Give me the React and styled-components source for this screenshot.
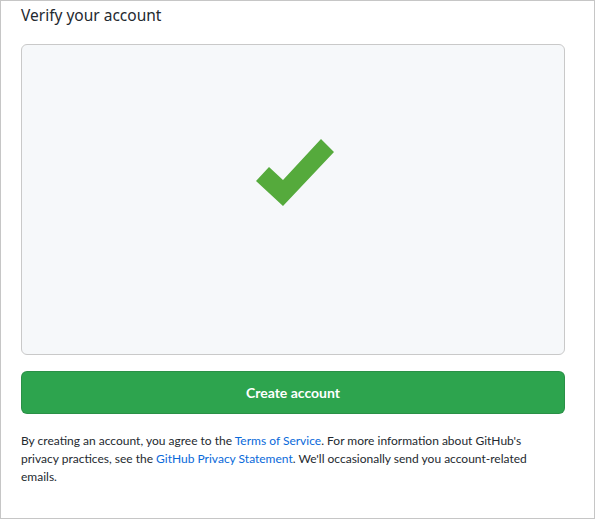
import React from 'react';
import styled, { createGlobalStyle } from 'styled-components';

const GlobalStyle = createGlobalStyle`
  html, body {
    margin: 0;
    padding: 0;
    background: #ffffff;
  }
  * {
    box-sizing: border-box;
  }
`;

const App = () => {
  return (
    <>
      <GlobalStyle />
      <Frame>
        <Title>Verify your account</Title>
        <Captcha>
          <svg width="84" height="68" viewBox="0 0 84 68" aria-hidden="true">
            <polygon points="5,42 18,28 32,41 70,0 83,13 32,67" fill="#55aa3c" />
          </svg>
        </Captcha>
        <Button type="button">Create account</Button>
        <Legal>
          By creating an account, you agree to the <Link href="#">Terms of Service</Link>. For more
          information about GitHub's privacy practices, see the{' '}
          <Link href="#">GitHub Privacy Statement</Link>. We'll occasionally send you account-related
          emails.
        </Legal>
      </Frame>
    </>
  );
};

export default App;

const Frame = styled.div`
  width: 595px;
  height: 519px;
  border: 1px solid #c6c6c6;
  padding: 4px 29px 0 20px;
  display: flex;
  flex-direction: column;
  font-family: 'Noto Sans', 'Open Sans', sans-serif;
  color: #24292f;
`;

const Title = styled.h2`
  margin: 0;
  font-size: 15.5px;
  line-height: 21px;
  font-weight: 400;
  color: #24292f;
`;

const Captcha = styled.div`
  margin-top: 18px;
  height: 311px;
  border: 1px solid #c9c9c9;
  border-radius: 6px;
  background: #f6f8fa;
  display: flex;
  justify-content: center;
  align-items: flex-start;
  padding-top: 94px;
`;

const Button = styled.button`
  margin-top: 16px;
  height: 43px;
  width: 100%;
  border: 1px solid rgba(27, 31, 36, 0.15);
  border-radius: 6px;
  background: #2da44e;
  color: #ffffff;
  font-family: Lato, 'Noto Sans', sans-serif;
  font-size: 14px;
  font-weight: 700;
  cursor: pointer;
`;

const Legal = styled.p`
  margin: 18px 0 0;
  max-width: 516px;
  font-family: Lato, 'Noto Sans', sans-serif;
  font-size: 12px;
  line-height: 18px;
  color: #24292f;
`;

const Link = styled.a`
  color: #0969da;
  text-decoration: none;
`;
